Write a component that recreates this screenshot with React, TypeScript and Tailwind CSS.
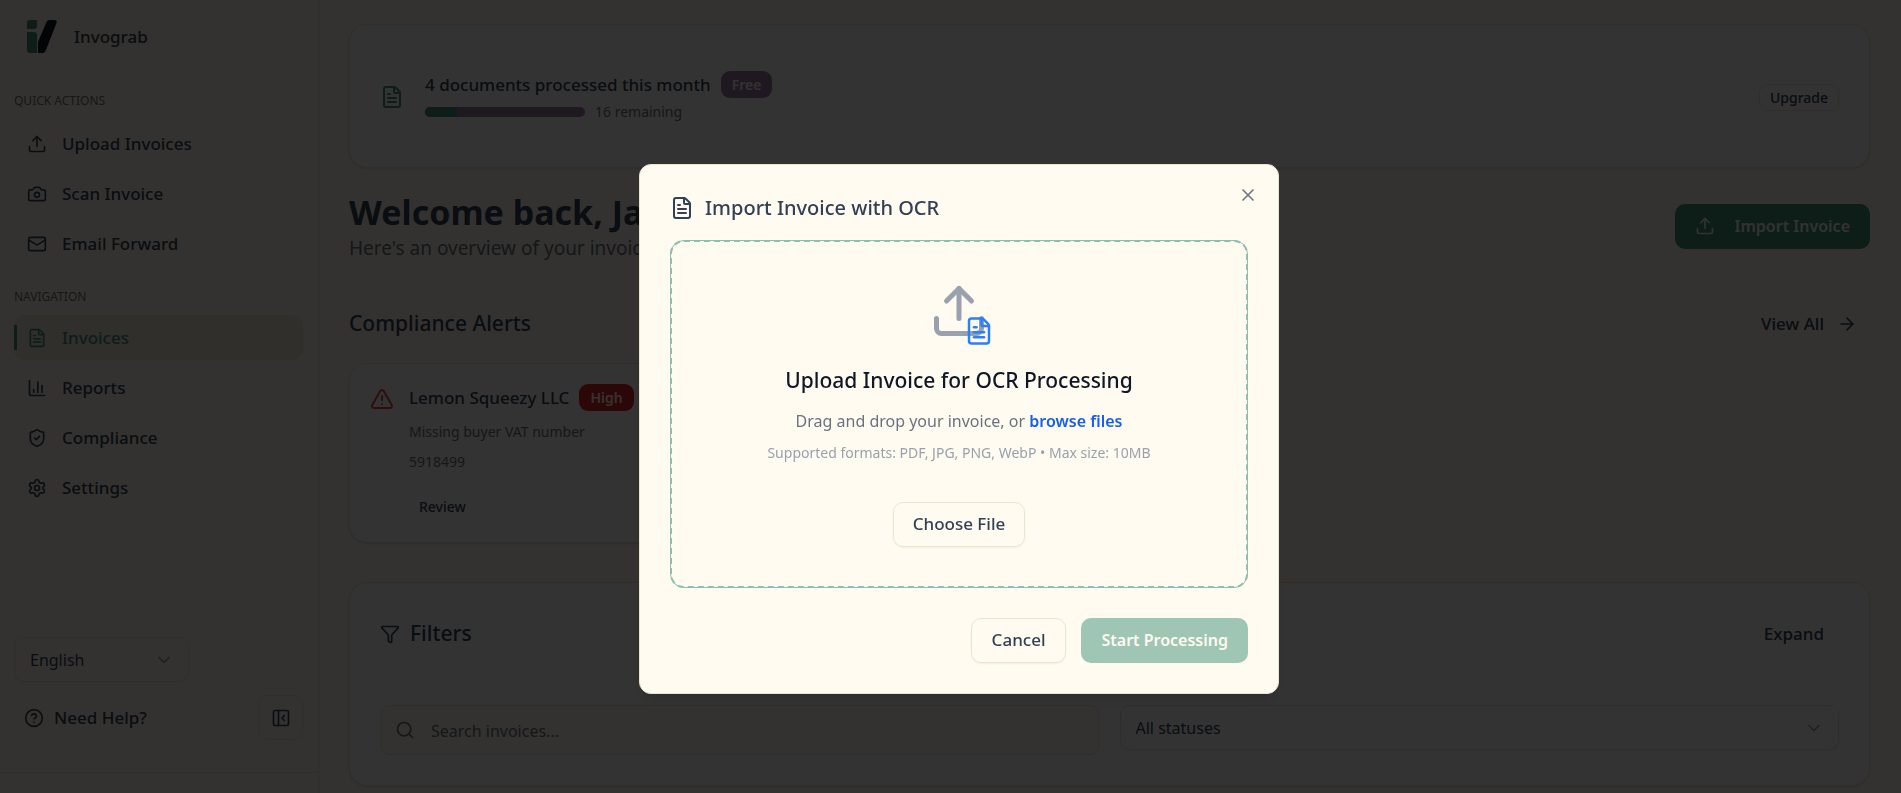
import { useState } from "react";
import {
  ArrowRight,
  Camera,
  ChartColumn,
  ChevronDown,
  CircleHelp,
  FileText,
  Funnel,
  Mail,
  PanelLeftClose,
  Search,
  Settings,
  ShieldCheck,
  TriangleAlert,
  Upload,
  X,
} from "lucide-react";

const quickActions = [
  { label: "Upload Invoices", icon: Upload },
  { label: "Scan Invoice", icon: Camera },
  { label: "Email Forward", icon: Mail },
];

const navigation = [
  { label: "Invoices", icon: FileText, active: true },
  { label: "Reports", icon: ChartColumn, active: false },
  { label: "Compliance", icon: ShieldCheck, active: false },
  { label: "Settings", icon: Settings, active: false },
];

const PLAN_LIMIT = 20;
const PROCESSED = 4;

function Logo() {
  return (
    <svg width="32" height="34" viewBox="0 0 32 34" aria-hidden="true">
      <path d="M4 0h7v6a3 3 0 0 1-3 3H1V3a3 3 0 0 1 3-3z" fill="#408f78" />
      <path d="M1 12h7a3 3 0 0 1 3 3v18H4a3 3 0 0 1-3-3z" fill="#408f78" />
      <path d="M20.500 2q1-2 3-2h5q3 0 2 3L19.500 31q-1 2-3 2H12V22z" fill="#0a1628" />
    </svg>
  );
}

function Sidebar() {
  return (
    <aside className="flex w-[319px] shrink-0 flex-col border-r border-[#ebe5d0]">
      <div className="flex h-[74px] items-center gap-4 px-[26px]">
        <Logo />
        <span className="text-[17px] font-medium">Invograb</span>
      </div>

      <nav className="flex flex-col pr-[15px] pl-[14px]">
        <p className="flex h-[47px] items-center pt-[6px] text-[12px] text-[#6b7280]">QUICK ACTIONS</p>
        <ul className="flex flex-col gap-[5px]">
          {quickActions.map(({ label, icon: Icon }) => (
            <li key={label}>
              <button
                type="button"
                className="flex h-[45px] w-full items-center gap-[15px] rounded-[10px] px-[13px] text-[17px] font-medium"
              >
                <Icon size={20} />
                {label}
              </button>
            </li>
          ))}
        </ul>

        <p className="mt-[8px] flex h-[41px] items-center pt-1 text-[12px] text-[#6b7280]">NAVIGATION</p>
        <ul className="flex flex-col gap-[5px]">
          {navigation.map(({ label, icon: Icon, active }) => (
            <li key={label} className="relative">
              {active && <span className="absolute top-[10px] left-0 h-[25px] w-[3px] bg-[#408f78]" />}
              <a
                href="#"
                className={
                  active
                    ? "flex h-[45px] items-center gap-[15px] rounded-[10px] bg-[#efead6] px-[13px] text-[17px] font-medium text-[#408f78]"
                    : "flex h-[45px] items-center gap-[15px] rounded-[10px] px-[13px] text-[17px] font-medium"
                }
              >
                <Icon size={20} />
                {label}
              </a>
            </li>
          ))}
        </ul>
      </nav>

      <div className="mt-auto flex flex-col gap-[13px] pr-[15px] pb-[32px] pl-[14px]">
        <div className="relative w-[175px]">
          <select
            aria-label="Language"
            className="h-[45px] w-full appearance-none rounded-[10px] border border-[#ebe5d0] px-[15px] text-[16px] shadow-xs"
          >
            <option>English</option>
          </select>
          <ChevronDown size={20} className="pointer-events-none absolute top-[13px] right-[15px] opacity-50" />
        </div>
        <div className="flex items-center justify-between">
          <button type="button" className="flex items-center gap-[10px] px-[10px] text-[17px] font-medium">
            <CircleHelp size={20} />
            Need Help?
          </button>
          <button
            type="button"
            aria-label="Collapse sidebar"
            className="flex size-[45px] items-center justify-center rounded-[10px] border border-[#ebe5d0]"
          >
            <PanelLeftClose size={20} />
          </button>
        </div>
      </div>
      <div className="h-[21px] border-t border-[#ebe5d0]" />
    </aside>
  );
}

function UsageCard() {
  const percent = (PROCESSED / PLAN_LIMIT) * 100;

  return (
    <section className="flex h-[144px] items-center justify-between rounded-[18px] border border-[#ebe5d0] bg-white px-[30px] pt-[2px] shadow-sm">
      <div className="flex items-center gap-[21px]">
        <FileText size={24} className="text-[#408f78]" />
        <div className="flex flex-col gap-[3px]">
          <div className="flex items-center gap-[10px]">
            <p className="text-[17px] font-medium">4 documents processed this month</p>
            <span className="flex h-[27px] items-center rounded-[9px] bg-[#a078a0] px-[11px] text-[14px] font-semibold text-[#fffbf0]">
              Free
            </span>
          </div>
          <div className="flex items-center gap-[10px]">
            <div className="h-[10px] w-[160px] overflow-hidden rounded-full bg-[#a078a0]">
              <div className="h-full bg-[#408f78]" style={{ width: `${percent}%` }} />
            </div>
            <span className="text-[14px] leading-[22px] text-[#6b7280]">16 remaining</span>
          </div>
        </div>
      </div>
      <button
        type="button"
        className="h-[27px] rounded-[9px] border border-[#ebe5d0] px-[10px] text-[14px] font-medium"
      >
        Upgrade
      </button>
    </section>
  );
}

function AlertCard() {
  return (
    <article className="flex items-start gap-[15px] rounded-[18px] border border-[#ebe5d0] bg-white px-[20px] py-[20px] shadow-sm">
      <TriangleAlert size={24} className="mt-[3px] shrink-0 text-[#ef4444]" />
      <div>
        <div className="flex items-center gap-[10px]">
          <h3 className="text-[17px] font-medium">Lemon Squeezy LLC</h3>
          <span className="flex h-[27px] items-center rounded-[9px] bg-[#dc2626] px-[11px] text-[14px] font-semibold text-[#fffbf0]">
            High
          </span>
        </div>
        <p className="mt-[6px] text-[14px] leading-[30px] text-[#6b7280]">Missing buyer VAT number</p>
        <p className="text-[14px] leading-[30px] text-[#6b7280]">5918499</p>
        <button type="button" className="mt-[13px] h-[32px] px-[10px] text-[14px] font-medium">
          Review
        </button>
      </div>
    </article>
  );
}

function Filters() {
  return (
    <section className="mt-[39px] rounded-[18px] border border-[#ebe5d0] bg-white px-[30px] pt-[28px] pb-[30px] shadow-sm">
      <div className="flex items-center justify-between">
        <h2 className="flex items-center gap-[10px] text-[21px] font-medium">
          <Funnel size={20} />
          Filters
        </h2>
        <button type="button" className="h-[45px] px-[15px] text-[17px] font-medium">
          Expand
        </button>
      </div>
      <div className="mt-[49px] grid grid-cols-2 items-start gap-[20px]">
        <div className="relative">
          <Search size={20} className="pointer-events-none absolute top-[15px] left-[15px] text-[#6b7280]" />
          <input
            type="text"
            aria-label="Search invoices"
            placeholder="Search invoices..."
            className="h-[50px] w-full rounded-[10px] border border-[#ebe5d0] bg-[#fffbf0] pt-[2px] pr-4 pl-[50px] text-[16px] placeholder:text-[#6b7280]"
          />
        </div>
        <div className="relative">
          <select
            aria-label="Status"
            className="h-[45px] w-full appearance-none rounded-[10px] border border-[#ebe5d0] bg-white px-[15px] text-[16px] shadow-xs"
          >
            <option>All statuses</option>
          </select>
          <ChevronDown size={20} className="pointer-events-none absolute top-[13px] right-[15px] opacity-50" />
        </div>
      </div>
    </section>
  );
}

function ImportDialog({ onClose }: { onClose: () => void }) {
  return (
    <div className="fixed inset-0 flex items-center justify-center bg-black/80 pt-[64px] pl-[17px]">
      <div
        role="dialog"
        aria-modal="true"
        aria-labelledby="import-title"
        className="relative w-full max-w-[640px] rounded-[12px] border border-[#ebe5d0] bg-[#fffbf0] p-[30px] shadow-lg"
      >
        <button
          type="button"
          aria-label="Close"
          onClick={onClose}
          className="absolute top-[20px] right-[20px] text-[#334155] opacity-70"
        >
          <X size={20} />
        </button>

        <h2 id="import-title" className="flex h-[26px] items-center gap-[11px] text-[20px] font-medium">
          <FileText size={24} />
          Import Invoice with OCR
        </h2>

        <div className="mt-[19px] flex flex-col items-center rounded-[14px] border-2 border-dashed border-[#8dbfb1] px-8 pt-[39px] pb-[39px] outline-1 -outline-offset-1 outline-[#8dbfb1]">
          <div className="relative">
            <Upload size={60} className="text-[#99a1af]" />
            <FileText size={30} className="absolute -right-[5px] -bottom-[5px] text-[#2b7fff]" />
          </div>
          <h3 className="mt-[24px] text-[21px] leading-[30px] font-medium text-[#101828]">
            Upload Invoice for OCR Processing
          </h3>
          <p className="mt-[11px] text-[16px] leading-[30px] text-[#6a7282]">
            Drag and drop your invoice, or{" "}
            <a href="#" className="font-semibold text-[#155dfc]">
              browse files
            </a>
          </p>
          <p className="mt-[5px] text-[14px] leading-[24px] text-[#99a1af]">
            Supported formats: PDF, JPG, PNG, WebP • Max size: 10MB
          </p>
          <button
            type="button"
            className="mt-[37px] h-[45px] rounded-[10px] border border-[#ebe5d0] px-[19px] text-[17px] font-medium shadow-xs"
          >
            Choose File
          </button>
        </div>

        <div className="mt-[30px] flex justify-end gap-[15px]">
          <button
            type="button"
            onClick={onClose}
            className="h-[45px] rounded-[10px] border border-[#ebe5d0] px-[20px] text-[17px] font-medium shadow-xs"
          >
            Cancel
          </button>
          <button
            type="button"
            disabled
            className="h-[45px] rounded-[10px] bg-[#408f78] px-[20px] text-[16px] font-semibold text-[#fffbf0] opacity-50"
          >
            Start Processing
          </button>
        </div>
      </div>
    </div>
  );
}

export default function App() {
  const [open, setOpen] = useState(true);

  return (
    <div className="flex h-screen overflow-hidden bg-[#fffbf0] font-['Noto_Sans','Open_Sans',sans-serif] text-[#334155]">
      <Sidebar />

      <main className="min-w-0 flex-1 overflow-hidden pt-[24px] pr-[31px] pl-[30px]">
        <UsageCard />

        <div className="mt-[22px] flex items-center justify-between">
          <div>
            <h1 className="text-[34px] leading-[44px] font-bold whitespace-nowrap">Welcome back, Jane</h1>
            <p className="text-[19px] leading-[28px] text-[#6b7280]">
              Here's an overview of your invoices
            </p>
          </div>
          <button
            type="button"
            onClick={() => setOpen(true)}
            className="flex h-[45px] items-center gap-[20px] rounded-[10px] bg-[#408f78] px-[20px] text-[16px] font-semibold text-[#fffbf0]"
          >
            <Upload size={20} />
            Import Invoice
          </button>
        </div>

        <div className="mt-[39px] flex items-center justify-between">
          <h2 className="text-[21px] font-medium">Compliance Alerts</h2>
          <button type="button" className="flex h-[45px] items-center gap-[13px] px-[13px] text-[17px] font-medium">
            View All
            <ArrowRight size={20} />
          </button>
        </div>

        <div className="mt-[17px] grid grid-cols-3 gap-[20px]">
          <AlertCard />
        </div>

        <Filters />
      </main>

      {open && <ImportDialog onClose={() => setOpen(false)} />}
    </div>
  );
}
